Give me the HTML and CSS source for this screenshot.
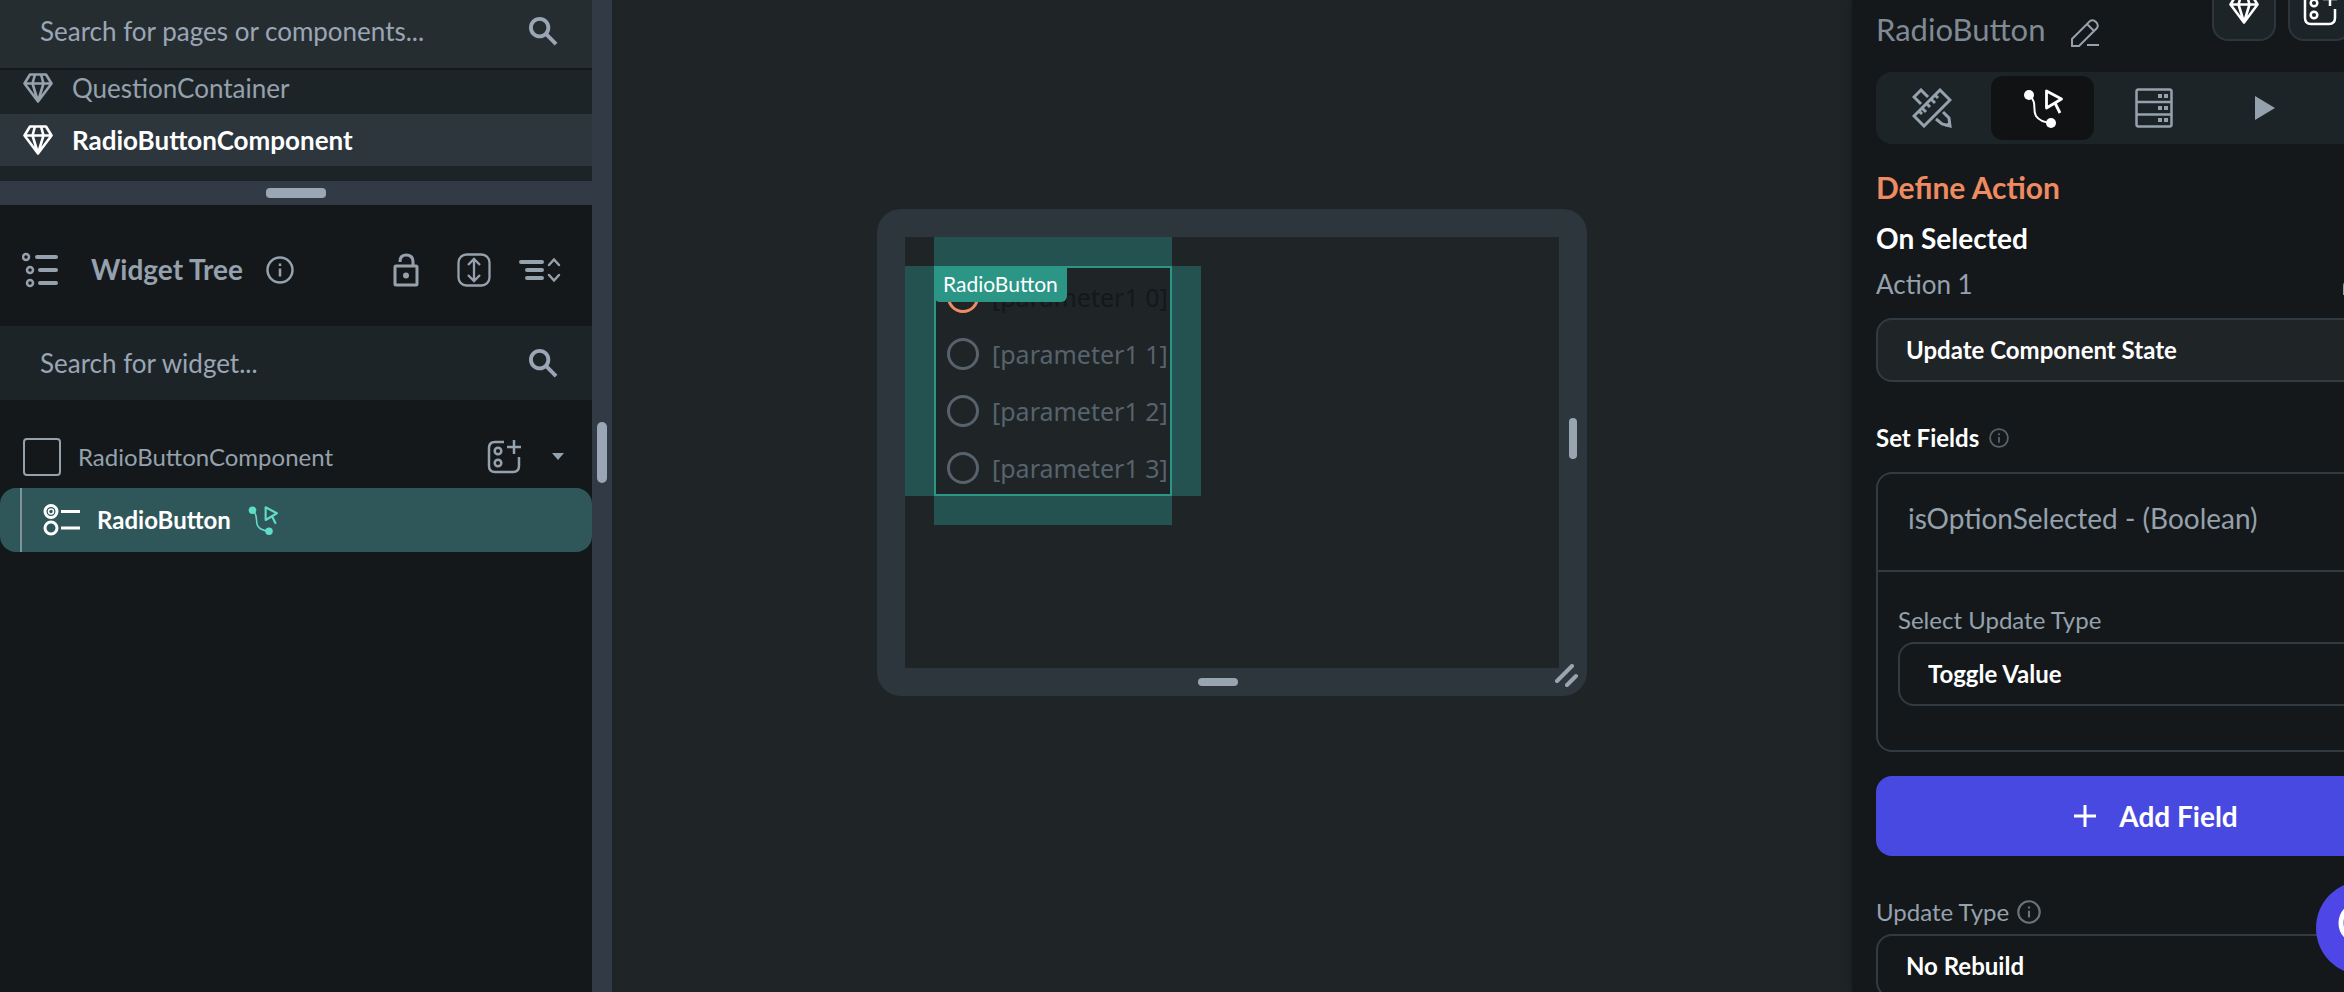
FILE: index.html
```html
<!DOCTYPE html>
<html lang="en">
<head>
    <meta charset="UTF-8">
    <meta name="viewport" content="width=device-width, initial-scale=1.0">
    <title>RadioButtonComponent</title>
    <link rel="stylesheet" href="styles.css">
</head>
<body>
    <!-- shared icons -->
    <svg class="sprite" aria-hidden="true">
        <symbol id="i-search" viewBox="0 0 30 30">
            <circle cx="11" cy="11" r="9" fill="none" stroke="currentColor" stroke-width="4"/>
            <path d="M17 17L28 28" stroke="currentColor" stroke-width="4" fill="none"/>
        </symbol>
        <symbol id="i-gem" viewBox="0 0 30 30">
            <path d="M7 1.500H23L28.500 10.500L15 28.500L1.500 10.500ZM1.500 10.500H28.500M12 1.500L9.500 10.500L15 28.500L20.500 10.500L18 1.500" fill="none" stroke="currentColor" stroke-width="2.600" stroke-linejoin="round"/>
        </symbol>
        <symbol id="i-info" viewBox="0 0 28 28">
            <circle cx="14" cy="14" r="12.500" fill="none" stroke="currentColor" stroke-width="2.500"/>
            <path d="M14 12.500V20.500M14 7.500V10" fill="none" stroke="currentColor" stroke-width="2.500"/>
        </symbol>
        <symbol id="i-add" viewBox="0 0 34 34">
            <path d="M17 2H8Q2 2 2 8V26Q2 32 8 32H26Q32 32 32 26V17M27 0V14M20 7H34" fill="none" stroke="currentColor" stroke-width="2.500"/>
            <circle cx="11" cy="11" r="3.300" fill="none" stroke="currentColor" stroke-width="2.500"/>
            <circle cx="11" cy="23" r="3.300" fill="none" stroke="currentColor" stroke-width="2.500"/>
        </symbol>
        <symbol id="i-flow" viewBox="0 0 40 40">
            <circle cx="6" cy="7" r="5" fill="currentColor"/>
            <circle cx="28" cy="35" r="5" fill="currentColor"/>
            <path d="M6 7C15 15 9 21 13 28Q17 34 28 35" fill="none" stroke="currentColor" stroke-width="2"/>
            <path d="M23.500 3V20L38.500 11ZM32 15L37 25" fill="none" stroke="currentColor" stroke-width="2.800" stroke-linejoin="round"/>
        </symbol>
    </svg>

    <div class="app">
        <aside class="sidebar">
            <label class="search search-pages">
                <input type="text" placeholder="Search for pages or components..." aria-label="Search for pages or components">
                <svg class="icon-search"><use href="#i-search"/></svg>
            </label>
            <nav class="pages">
                <a class="page" href="#question"><svg class="icon-gem"><use href="#i-gem"/></svg>QuestionContainer</a>
                <a class="page selected" href="#radio"><svg class="icon-gem"><use href="#i-gem"/></svg>RadioButtonComponent</a>
            </nav>
            <div class="divider"><span class="grip"></span></div>

            <header class="tree-header">
                <svg class="icon-tree" viewBox="0 0 36 36" fill="none" stroke="currentColor" stroke-width="2.500">
                    <circle cx="4" cy="5" r="3"/><circle cx="8" cy="18" r="3"/><circle cx="8" cy="31" r="3"/>
                    <path d="M15 5H34M18 18H34M18 31H34" stroke-width="4" stroke-linecap="round"/>
                </svg>
                <h2>Widget Tree</h2>
                <svg class="icon-info"><use href="#i-info"/></svg>
                <div class="tree-tools">
                    <button type="button" class="lock" aria-label="Lock">
                        <svg width="26" height="34" viewBox="0 0 26 34" fill="none" stroke="currentColor" stroke-width="3">
                            <rect x="2" y="13" width="22" height="19" rx="1"/>
                            <path d="M7 9Q7 2 13 2Q20 2 20 9V13"/><circle cx="13" cy="22.500" r="3" fill="currentColor" stroke="none"/>
                        </svg>
                    </button>
                    <button type="button" aria-label="Expand">
                        <svg width="34" height="34" viewBox="0 0 34 34" fill="none" stroke="currentColor" stroke-width="2.300">
                            <rect x="1.500" y="1.500" width="31" height="31" rx="8"/>
                            <path d="M17 7V27M11 12L17 6L23 12M11 22L17 28L23 22"/>
                        </svg>
                    </button>
                    <button type="button" aria-label="Collapse all">
                        <svg width="42" height="26" viewBox="0 0 42 26" fill="none" stroke="currentColor" stroke-width="4" stroke-linecap="round">
                            <path d="M2 5H23M8 13H23M8 21H23"/><path d="M30 8L35 2.500L40 8M30 18L35 23.500L40 18" stroke-width="2.500"/>
                        </svg>
                    </button>
                </div>
            </header>
            <label class="search">
                <input type="text" placeholder="Search for widget..." aria-label="Search for widget">
                <svg class="icon-search"><use href="#i-search"/></svg>
            </label>

            <div class="tree">
                <div class="tree-root">
                    <label><input type="checkbox">RadioButtonComponent</label>
                    <button type="button" class="add-child" aria-label="Add widget"><svg class="icon-add"><use href="#i-add"/></svg></button>
                    <svg class="caret" viewBox="0 0 12 7"><path d="M0 0H12L6 7Z" fill="currentColor"/></svg>
                </div>
                <a class="tree-item" href="#widget">
                    <svg class="icon-radio" viewBox="0 0 38 32" fill="none" stroke="currentColor" stroke-width="3">
                        <circle cx="8" cy="7.500" r="6"/><circle cx="8" cy="7.500" r="2.500" stroke-width="1.500"/><circle cx="8" cy="24" r="6"/>
                        <path d="M18 7.500H37M18 24H37"/>
                    </svg>
                    RadioButton
                    <svg class="icon-flow"><use href="#i-flow"/></svg>
                </a>
            </div>
        </aside>

        <div class="splitter"><span class="thumb"></span></div>

        <main class="canvas">
            <div class="frame">
                <div class="screen">
                    <div class="pad-v"></div>
                    <div class="pad-h"></div>
                    <div class="widget">
                        <label class="option checked"><input type="radio" name="parameter" checked>[parameter1 0]</label>
                        <label class="option"><input type="radio" name="parameter">[parameter1 1]</label>
                        <label class="option"><input type="radio" name="parameter">[parameter1 2]</label>
                        <label class="option"><input type="radio" name="parameter">[parameter1 3]</label>
                        <span class="tag">RadioButton</span>
                    </div>
                </div>
                <span class="handle-right"></span>
                <span class="handle-bottom"></span>
                <svg class="handle-corner" viewBox="0 0 24 24"><path d="M2 17L17 2M12 21L21 12" stroke="currentColor" stroke-width="4" stroke-linecap="round"/></svg>
            </div>
        </main>

        <aside class="properties">
            <div class="properties-inner">
                <header class="widget-header">
                    <h1>RadioButton</h1>
                    <button type="button" class="edit" aria-label="Rename">
                        <svg width="28" height="28" viewBox="0 0 28 28" fill="none" stroke="currentColor" stroke-width="2">
                            <path d="M1 27V20L19 2Q22 0 25 3Q28 6 26 9L8 27ZM16 5L23 12M16 26H28"/>
                        </svg>
                    </button>
                    <div class="header-actions">
                        <button type="button" aria-label="Component"><svg class="icon-gem"><use href="#i-gem"/></svg></button>
                        <button type="button" aria-label="Wrap widget"><svg class="icon-add"><use href="#i-add"/></svg></button>
                    </div>
                </header>

                <nav class="tabs">
                    <button type="button" aria-label="Properties">
                        <svg width="40" height="40" viewBox="0 0 40 40" fill="none" stroke="currentColor" stroke-width="3">
                            <path d="M28 2L38 12L12 38L2 28ZM10 20L14 24M15 16L18 19M19 11L23 15M23 7L26 10M8 24L10 26"/>
                            <path d="M16 9L9 2L2 9L9 16M31 24L37 30L38 38L30 36L24 31"/><path d="M33 38H38V33Z" fill="currentColor" stroke-width="1"/>
                        </svg>
                    </button>
                    <button type="button" class="active" aria-label="Actions"><svg width="40" height="40"><use href="#i-flow"/></svg></button>
                    <button type="button" aria-label="Backend query">
                        <svg width="38" height="40" viewBox="0 0 38 40" fill="none" stroke="currentColor" stroke-width="2.500">
                            <rect x="1.500" y="1.500" width="35" height="37" rx="2"/><path d="M1 14H37M1 26.500H37"/>
                            <path d="M23 8H27M29 8H33M23 20H27M29 20H33M23 32H27M29 32H33" stroke-width="4"/>
                        </svg>
                    </button>
                    <button type="button" aria-label="Animations"><svg width="20" height="24" viewBox="0 0 20 24"><path d="M0 0L20 12L0 24Z" fill="currentColor"/></svg></button>
                    <button type="button" aria-label="Documentation"></button>
                </nav>

                <h2 class="define">Define Action</h2>
                <h3 class="trigger">On Selected</h3>
                <div class="action-name">
                    <span>Action 1</span>
                    <svg width="24" height="24" viewBox="0 0 24 24" fill="none" stroke="currentColor" stroke-width="2"><path d="M2 22V14Q2 10 6 10H18Q22 10 22 14V22Z"/></svg>
                </div>
                <select class="filled" aria-label="Action type"><option>Update Component State</option></select>

                <div class="field-title">Set Fields <svg class="icon-hint"><use href="#i-info"/></svg></div>
                <section class="card">
                    <header>isOptionSelected - (Boolean)</header>
                    <div class="card-body">
                        <label for="field-update">Select Update Type</label>
                        <select id="field-update"><option>Toggle Value</option></select>
                    </div>
                </section>

                <button type="button" class="add-field">
                    <svg width="22" height="22" viewBox="0 0 22 22"><path d="M11 0V22M0 11H22" stroke="currentColor" stroke-width="3"/></svg>
                    Add Field
                </button>

                <label class="update-label" for="update-type">Update Type <svg class="icon-info"><use href="#i-info"/></svg></label>
                <select id="update-type"><option>No Rebuild</option></select>
            </div>
            <button type="button" class="help" aria-label="Help">
                <svg width="54" height="54" viewBox="0 0 54 54" fill="none" stroke="currentColor" stroke-width="5"><circle cx="24" cy="22" r="19"/></svg>
            </button>
        </aside>
    </div>
</body>
</html>
```
FILE: styles.css
```css
* {
    margin: 0;
    padding: 0;
    box-sizing: border-box;
}

body {
    font-family: 'Lato', sans-serif;
    font-size: 24px;
    line-height: 32px;
    color: #95a1ac;
    background: #1f2427;
}

button,
input,
select {
    font: inherit;
    color: inherit;
    background: none;
    border: none;
    outline: none;
    appearance: none;
}

button {
    display: flex;
    align-items: center;
    justify-content: center;
    cursor: pointer;
}

a {
    color: inherit;
    text-decoration: none;
}

svg {
    flex-shrink: 0;
}

.sprite {
    display: none;
}

.app {
    display: grid;
    grid-template-columns: 592px 20px 1fr 492px;
    height: 100vh;
    overflow: hidden;
}

/* left side */
.sidebar {
    background: #14181b;
    overflow: hidden;
}

.search {
    display: flex;
    align-items: center;
    height: 74px;
    padding: 0 34px 0 40px;
    background: #1d2428;
    color: #9aa5b5;
    font-size: 26px;
}

.search input {
    flex: 1;
    min-width: 0;
}

.search input::placeholder {
    color: #9aa5b5;
    opacity: 1;
}

.search-pages {
    height: 70px;
    padding-bottom: 6px;
    background: #262d31;
    border-bottom: 2px solid #14181b;
}

.icon-search {
    width: 29px;
    height: 29px;
}

.icon-gem {
    width: 30px;
    height: 30px;
}

.pages {
    display: flex;
    flex-direction: column;
    justify-content: flex-end;
    height: 111px;
    padding-bottom: 15px;
    overflow: hidden;
    background: #1d2428;
}

.page {
    display: flex;
    flex-shrink: 0;
    align-items: center;
    gap: 19px;
    height: 52px;
    padding-left: 23px;
    font-size: 26px;
}

.page.selected {
    background: #2d353d;
    color: #fff;
    font-weight: 700;
}

.divider {
    display: flex;
    align-items: center;
    justify-content: center;
    height: 24px;
    background: #323a46;
}

.grip {
    width: 60px;
    height: 10px;
    border-radius: 4px;
    background: #9aa5b5;
}

.tree-header {
    display: flex;
    align-items: center;
    height: 121px;
    padding: 8px 31px 0 22px;
}

.icon-tree {
    width: 36px;
    height: 36px;
}

.tree-header h2 {
    margin: 0 23px 0 33px;
    padding-bottom: 2px;
    font-size: 28px;
    font-weight: 700;
}

.icon-info {
    width: 28px;
    height: 28px;
}

.tree-tools {
    display: flex;
    gap: 28px;
    margin-left: auto;
}

.lock {
    margin-right: 10px;
}

.tree {
    padding-top: 25px;
}

.tree-root {
    display: flex;
    align-items: center;
    height: 63px;
    padding: 0 28px 0 23px;
}

.tree-root label {
    display: flex;
    align-items: center;
    gap: 17px;
}

.tree-root input {
    width: 38px;
    height: 38px;
    border: 2px solid #95a1ac;
    border-radius: 4px;
}

.add-child {
    margin: 0 31px 0 auto;
}

.icon-add {
    width: 34px;
    height: 34px;
}

.caret {
    width: 12px;
    height: 7px;
}

.tree-item {
    display: flex;
    align-items: center;
    height: 64px;
    padding-left: 20px;
    border-radius: 16px;
    background: #2f5759;
    color: #fff;
    font-weight: 700;
}

.tree-item::before {
    content: '';
    width: 2px;
    height: 64px;
    margin-right: 21px;
    background: #7f9299;
}

.icon-radio {
    width: 38px;
    height: 32px;
    margin-right: 16px;
}

.icon-flow {
    width: 30px;
    height: 30px;
    margin-left: 17px;
    color: #60dcc8;
}

.splitter {
    display: flex;
    justify-content: center;
    padding-top: 422px;
    background: #323a46;
}

.thumb {
    width: 10px;
    height: 61px;
    border-radius: 5px;
    background: #9aa5b5;
}

/* canvas */
.canvas {
    display: flex;
    justify-content: center;
    align-items: flex-start;
    padding-top: 209px;
    background: #1f2427;
}

.frame {
    position: relative;
    padding: 28px;
    border-radius: 24px;
    background: #2d353d;
    color: #98a5b0;
}

.screen {
    position: relative;
    width: 654px;
    height: 431px;
    padding: 29px;
    background: #1f2427;
}

/* spacing guides around the selected widget */
.pad-v,
.pad-h {
    position: absolute;
    background: #235250;
}

.pad-v {
    left: 29px;
    top: 0;
    width: 238px;
    height: 288px;
}

.pad-h {
    left: 0;
    top: 29px;
    width: 296px;
    height: 230px;
}

.widget {
    position: relative;
    width: 238px;
    height: 230px;
    border: 2px solid #2b9686;
    background: #1f2427;
    overflow: hidden;
}

.option {
    display: flex;
    align-items: center;
    gap: 13px;
    height: 57px;
    padding-left: 11px;
    color: #57636c;
    font-family: 'Noto Sans', sans-serif;
    font-size: 25px;
    white-space: nowrap;
}

.option.checked {
    color: #14181b;
}

.option input {
    flex-shrink: 0;
    width: 32px;
    height: 32px;
    border: 3px solid #57636c;
    border-radius: 50%;
}

.option.checked input {
    border-color: #f08b64;
}

.tag {
    position: absolute;
    left: -2px;
    top: -2px;
    padding: 2px 9px;
    border-radius: 0 0 6px 6px;
    background: #2b9686;
    color: #fff;
    font-size: 21px;
}

.handle-right,
.handle-bottom,
.handle-corner {
    position: absolute;
    border-radius: 4px;
}

.handle-right {
    right: 10px;
    top: 209px;
    width: 8px;
    height: 41px;
    background: #98a5b0;
}

.handle-bottom {
    left: 321px;
    bottom: 10px;
    width: 40px;
    height: 8px;
    background: #98a5b0;
}

.handle-corner {
    right: 8px;
    bottom: 8px;
    width: 24px;
    height: 24px;
}

/* right side */
.properties {
    position: relative;
    overflow: hidden;
    padding-left: 24px;
    background: #14181b;
    box-shadow: 0 0 8px #191c1f;
}

.properties-inner {
    width: 560px;
}

.widget-header {
    display: flex;
    align-items: center;
    height: 72px;
    padding-bottom: 14px;
}

.widget-header h1 {
    font-size: 31px;
    font-weight: 400;
    color: #808a94;
}

.edit {
    margin: 8px 0 0 26px;
}

.header-actions {
    display: flex;
    gap: 12px;
    margin: 0 84px 40px auto;
    color: #fff;
}

.header-actions button {
    width: 64px;
    height: 64px;
    border: 2px solid #2d353d;
    border-radius: 16px;
    background: #1d2428;
}

.tabs {
    display: flex;
    height: 72px;
    border-radius: 16px;
    background: #1d2428;
}

.tabs button {
    width: 103px;
    margin: 4px;
    border-radius: 12px;
}

.tabs .active {
    background: #101213;
    color: #fff;
}

.define {
    margin-top: 23px;
    font-size: 30px;
    line-height: 40px;
    color: #ee8b60;
}

.trigger {
    margin-top: 15px;
    font-size: 28px;
    color: #fff;
}

.action-name {
    display: flex;
    align-items: center;
    justify-content: space-between;
    height: 64px;
    padding: 0 70px 4px 0;
    font-size: 26px;
}

select {
    display: block;
    width: 100%;
    height: 64px;
    padding: 0 28px;
    border: 2px solid #323a42;
    border-radius: 16px;
    color: #fff;
    font-weight: 700;
}

.filled {
    background: #1f2427;
}

.field-title {
    display: flex;
    align-items: center;
    gap: 10px;
    margin: 40px 0 18px;
    color: #fff;
    font-weight: 700;
}

.icon-hint {
    width: 20px;
    height: 20px;
    color: #57636c;
}

.card {
    border: 2px solid #323a42;
    border-radius: 16px;
}

.card header {
    padding: 28px 30px 36px;
    border-bottom: 2px solid #323a42;
    font-size: 28px;
}

.card-body {
    padding: 32px 20px 44px;
}

.card-body label {
    display: block;
    margin-bottom: 6px;
}

.add-field {
    gap: 23px;
    width: 100%;
    height: 80px;
    margin: 24px 0 40px;
    border-radius: 16px;
    background: #4749e0;
    color: #fff;
    font-size: 28px;
    font-weight: 700;
}

.update-label {
    display: flex;
    align-items: center;
    gap: 8px;
    margin-bottom: 6px;
}

.update-label .icon-info {
    width: 24px;
    height: 24px;
    color: #68737b;
}

/* floating help button, partly outside the panel */
.help {
    position: absolute;
    right: -66px;
    bottom: 17px;
    width: 94px;
    height: 94px;
    border-radius: 50%;
    background: #4f46e8;
    color: #fff;
}
```
